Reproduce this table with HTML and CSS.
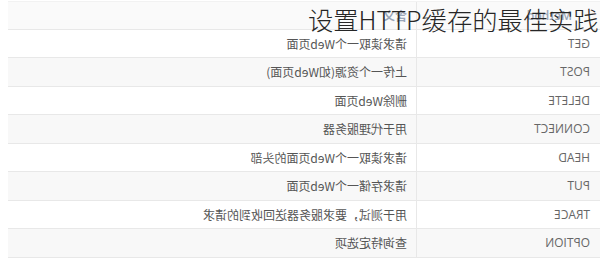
FILE: index.html
```html
<!DOCTYPE html>
<html lang="zh-CN">
<head>
<meta charset="utf-8">
<title>设置HTTP缓存的最佳实践</title>
<link rel="stylesheet" href="styles.css">
</head>
<body>
<div class="page">
  <div class="table">
    <div class="row head"><div class="c1">Method</div><div class="c2">含义</div></div>
    <div class="row"><div class="c1">GET</div><div class="c2">请求读取一个Web页面</div></div>
    <div class="row alt"><div class="c1">POST</div><div class="c2">上传一个资源(如Web页面)</div></div>
    <div class="row"><div class="c1">DELETE</div><div class="c2">删除Web页面</div></div>
    <div class="row alt"><div class="c1">CONNECT</div><div class="c2">用于代理服务器</div></div>
    <div class="row"><div class="c1">HEAD</div><div class="c2">请求读取一个Web页面的头部</div></div>
    <div class="row alt"><div class="c1">PUT</div><div class="c2">请求存储一个Web页面</div></div>
    <div class="row"><div class="c1">TRACE</div><div class="c2">用于测试，要求服务器送回收到的请求</div></div>
    <div class="row alt"><div class="c1">OPTION</div><div class="c2">查询特定选项</div></div>
  </div>
  <h1 class="title">设置HTTP缓存的最佳实践</h1>
</div>
</body>
</html>
```

FILE: styles.css
```css
html, body {
  margin: 0;
  padding: 0;
  background: #ffffff;
}
body {
  width: 600px;
  height: 266px;
  overflow: hidden;
}
.page {
  position: relative;
  width: 600px;
  height: 266px;
}
.table {
  transform: scaleX(-1);
  width: 600px;
  box-sizing: border-box;
  padding-top: 1px;
  padding-right: 8px;
  font-size: 12px;
}
.row {
  display: grid;
  grid-template-columns: 184px 1fr;
  height: 28.5px;
  box-sizing: border-box;
  border-bottom: 1px solid #e8e8e8;
  background: #ffffff;
}
.row.alt {
  background: #f8f8f8;
}
.row.head {
  background: #fafafa;
  border-top: 1px solid #f2f2f2;
}
.c1, .c2 {
  display: flex;
  align-items: center;
}
.c1 {
  padding-left: 10px;
  border-right: 1px solid #e8e8e8;
  font-family: "Open Sans", "Noto Sans", sans-serif;
  color: #666666;
}
.c2 {
  padding-left: 9px;
  font-family: "Noto Sans CJK SC", "Open Sans", sans-serif;
  color: #555555;
}
.head .c1 {
  padding-left: 28px;
  color: #9aa6b8;
  font-weight: 600;
}
.head .c2 {
  color: #9aa6b8;
  font-weight: 600;
}
.title {
  position: absolute;
  top: 4px;
  left: 308px;
  margin: 0;
  font-family: "Noto Sans CJK SC", sans-serif;
  font-size: 25.3px;
  line-height: 30px;
  font-weight: 300;
  color: #262626;
  white-space: nowrap;
}
```
